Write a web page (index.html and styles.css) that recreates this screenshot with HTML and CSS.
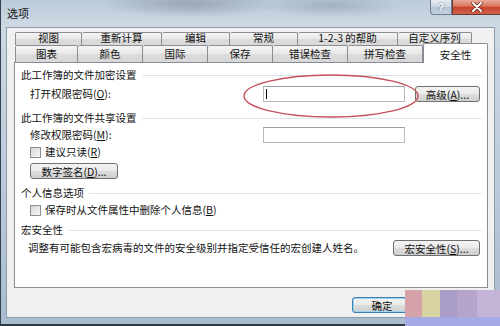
FILE: index.html
```html
<!DOCTYPE html>
<html lang="zh-CN">
<head>
  <meta charset="UTF-8">
  <title>选项</title>
  <link rel="stylesheet" href="styles.css">
</head>
<body>
  <div class="window">
    <div class="titlebar">
      <span class="title">选项</span>
      <div class="caption">
        <span class="cap-help">?</span>
        <span class="cap-close">
          <svg width="12" height="10" viewBox="0 0 12 10"><path d="M2 1 L10 9 M10 1 L2 9" stroke="#5a2218" stroke-width="3.4" stroke-linecap="round"/><path d="M2 1 L10 9 M10 1 L2 9" stroke="#fff" stroke-width="2" stroke-linecap="round"/></svg>
        </span>
      </div>
    </div>

    <div class="client">
      <div class="tabs">
        <div class="tab-row row-back">
          <span class="tab">视图</span>
          <span class="tab">重新计算</span>
          <span class="tab">编辑</span>
          <span class="tab">常规</span>
          <span class="tab">1-2-3 的帮助</span>
          <span class="tab">自定义序列</span>
        </div>
        <div class="tab-row row-front">
          <span class="tab">图表</span>
          <span class="tab">颜色</span>
          <span class="tab">国际</span>
          <span class="tab">保存</span>
          <span class="tab">错误检查</span>
          <span class="tab">拼写检查</span>
          <span class="tab active">安全性</span>
        </div>
      </div>

      <div class="panel">
        <div class="group first">此工作簿的文件加密设置</div>
        <div class="field field-open">
          <label class="field-label">打开权限密码(<u>O</u>):</label>
          <span class="textbox"><span class="caret"></span></span>
          <button class="btn btn-adv">高级(<u>A</u>)...</button>
        </div>

        <div class="group">此工作簿的文件共享设置</div>
        <div class="field field-modify">
          <label class="field-label">修改权限密码(<u>M</u>):</label>
          <span class="textbox"></span>
        </div>
        <div class="check"><span class="box"></span>建议只读(<u>R</u>)</div>
        <div class="indent"><button class="btn btn-sign">数字签名(<u>D</u>)...</button></div>

        <div class="group group-info">个人信息选项</div>
        <div class="check"><span class="box"></span>保存时从文件属性中删除个人信息(<u>B</u>)</div>

        <div class="group group-macro">宏安全性</div>
        <div class="macro">
          <span>调整有可能包含宏病毒的文件的安全级别并指定受信任的宏创建人姓名。</span>
          <button class="btn btn-macro">宏安全性(<u>S</u>)...</button>
        </div>
      </div>

      <div class="footer">
        <button class="btn btn-ok">确定</button>
        <button class="btn btn-cancel">取消</button>
      </div>
    </div>

    <!-- red mark around the password box -->
    <svg class="mark" width="500" height="326">
      <ellipse cx="331" cy="96" rx="87" ry="21" fill="none" stroke="#c4505a" stroke-width="1.4"/>
    </svg>

    <div class="watermark">
      <span class="wm-pink"></span>
      <span class="wm-yellow"></span>
      <span class="wm-purple"></span>
      <span class="wm-mauve"></span>
      <span class="wm-light"></span>
      <span class="wm-base"></span>
    </div>
  </div>
</body>
</html>
```

FILE: styles.css
```css
body {
  margin: 0;
  width: 500px;
  height: 326px;
  overflow: hidden;
  font-family: "Noto Sans CJK SC", sans-serif;
  font-size: 10.5px;
  color: #111;
}

.window {
  position: relative;
  width: 500px;
  height: 326px;
  display: flex;
  flex-direction: column;
  background:
    radial-gradient(ellipse 90px 14px at 190px 4px, rgba(80, 92, 112, 0.35), transparent),
    radial-gradient(ellipse 70px 12px at 330px 6px, rgba(80, 92, 112, 0.25), transparent),
    linear-gradient(#bccbd9, #cdd8e4 26px, #b9c9d9 60%, #a9bbce);
  box-shadow: inset 1px 0 0 #34414f, inset 0 -2px 0 #2f3944;
}

/* title bar */
.titlebar {
  height: 27px;
  display: flex;
  padding-left: 7px;
}
.title {
  margin-top: 7px;
  font-size: 11px;
  line-height: 13px;
  color: #101010;
}
.caption {
  margin-left: auto;
  display: flex;
  height: 15px;
}
.cap-help {
  width: 22px;
  box-sizing: border-box;
  border: 1px solid #6f7e8e;
  border-top: none;
  border-radius: 0 0 0 4px;
  background: linear-gradient(#e6ecf2, #ccd7e3 50%, #b5c4d4 52%, #c3d1de);
  color: #fff;
  font-family: "Liberation Sans", sans-serif;
  font-size: 11px;
  font-weight: bold;
  line-height: 14px;
  text-align: center;
  text-shadow: 0 0 2px #5b6877;
}
.cap-close {
  width: 48px;
  box-sizing: border-box;
  border: 1px solid #6b3a35;
  border-top: none;
  border-right: none;
  background: linear-gradient(#eaa898, #d9745e 45%, #c6432a 52%, #d0634c);
  display: flex;
  align-items: center;
  justify-content: center;
}

/* client area */
.client {
  margin: 0 5px 0 6px;
  height: 291px;
  box-sizing: border-box;
  border: 1px solid #8d9cab;
  background: #f0f0f0;
  padding: 4px 6px 0 7px;
}

.tabs {
  padding-left: 1px;
}
.tab-row {
  display: flex;
}
.tab {
  box-sizing: border-box;
  border: 1px solid #8c8e94;
  border-bottom: none;
  border-left: none;
  border-radius: 2px 2px 0 0;
  background: linear-gradient(#f4f4f4, #e8e8e8 50%, #dcdcdc 52%, #d8d8d8);
  text-align: center;
  white-space: nowrap;
}
.tab:first-child {
  border-left: 1px solid #8c8e94;
}
.row-back .tab {
  height: 13px;
  line-height: 10px;
}
.row-front .tab {
  height: 17px;
  line-height: 16px;
}
.row-back .tab:nth-child(1) { width: 67px; }
.row-back .tab:nth-child(2) { width: 80px; }
.row-back .tab:nth-child(3) { width: 68px; }
.row-back .tab:nth-child(4) { width: 68px; }
.row-back .tab:nth-child(5) { width: 100px; }
.row-back .tab:nth-child(6) { width: 74px; }
.row-front .tab:nth-child(1) { width: 63px; }
.row-front .tab:nth-child(2) { width: 65px; }
.row-front .tab:nth-child(3) { width: 65px; }
.row-front .tab:nth-child(4) { width: 65px; }
.row-front .tab:nth-child(5) { width: 75px; }
.row-front .tab:nth-child(6) { width: 75px; }
.row-front .tab:nth-child(7) { width: 65px; }

.row-front .tab.active {
  position: relative;
  z-index: 1;
  height: 20px;
  margin-top: -2px;
  margin-bottom: -1px;
  padding-top: 3px;
  background: #fff;
  border-left: 1px solid #898c95;
}

/* tab page */
.panel {
  height: 226px;
  box-sizing: border-box;
  border: 1px solid #898c95;
  background: #fff;
  padding: 5px 5px 0 6px;
}

.group {
  display: flex;
  align-items: center;
  height: 14px;
  line-height: 14px;
  margin-top: 9px;
}
.group::after {
  content: "";
  flex: 1;
  height: 1px;
  margin-left: 5px;
  background: #dde3e8;
}
.group.first { margin-top: 0; }
.group-info { margin-top: 7px; }
.group-macro { margin-top: 6px; }

.field {
  display: flex;
  align-items: center;
  height: 16px;
  margin-left: 9px;
}
.field-open { margin-top: 4px; }
.field-modify { margin-top: 2px; }
.field-label {
  width: 233px;
  line-height: 14px;
}
.textbox {
  width: 142px;
  height: 16px;
  box-sizing: border-box;
  border: 1px solid #b5b8be;
  border-top-color: #9a9ea6;
  background: #fff;
  padding: 2px 0 0 2px;
}
.caret {
  display: block;
  width: 1px;
  height: 10px;
  background: #000;
}

.check {
  display: flex;
  align-items: center;
  height: 14px;
  margin: 2px 0 0 9px;
  line-height: 14px;
}
.box {
  width: 11px;
  height: 11px;
  box-sizing: border-box;
  border: 1px solid #8e8f8f;
  background: linear-gradient(135deg, #d6d6d6, #f6f6f6);
  margin-right: 4px;
}
.group-info + .check { margin-top: 3px; }

.indent {
  margin: 4px 0 0 9px;
  display: flex;
}

.btn {
  height: 16px;
  box-sizing: border-box;
  border: 1px solid #707070;
  border-radius: 3px;
  background: linear-gradient(#f3f3f3, #ebebeb 48%, #dddddd 52%, #cfcfcf);
  font-family: inherit;
  font-size: 10.5px;
  line-height: 13px;
  color: #111;
  padding: 0;
  white-space: nowrap;
}
.btn-adv { width: 65px; margin-left: 10px; }
.btn-sign { width: 88px; }
.btn-macro { width: 87px; margin-right: 2px; }

.macro {
  display: flex;
  align-items: center;
  justify-content: space-between;
  height: 16px;
  margin-top: 3px;
  padding-left: 7px;
  line-height: 14px;
}

.footer {
  display: flex;
  justify-content: flex-end;
  gap: 6px;
  padding-top: 9px;
}
.btn-ok {
  width: 60px;
  border-color: #3c7fb1;
  box-shadow: inset 0 0 0 1px #9fd3f2;
}
.btn-cancel { width: 70px; }

/* overlays */
.mark {
  position: absolute;
  left: 0;
  top: 0;
  pointer-events: none;
}

.watermark {
  position: absolute;
  left: 405px;
  top: 290px;
  width: 95px;
  height: 36px;
  display: grid;
  grid-template-columns: 17px 18px 17px 20px 23px;
  grid-template-rows: 27px 9px;
}
.wm-pink { background: #d6a2aa; }
.wm-yellow { background: #d7d3a3; }
.wm-purple { background: #aa9dc9; }
.wm-mauve { background: #b6a5ca; }
.wm-light { background: #c2b3d7; }
.wm-base {
  grid-column: 1 / 6;
  background: #a5a9e4;
}
```
